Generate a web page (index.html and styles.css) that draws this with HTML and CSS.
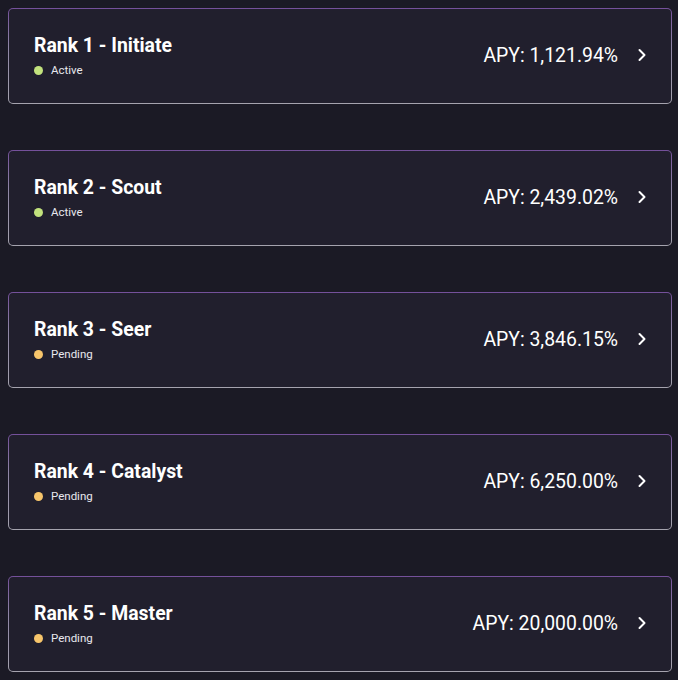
FILE: index.html
```html
<!DOCTYPE html>
<html>
<head>
<meta charset="utf-8">
<link rel="stylesheet" href="styles.css">
</head>
<body>
<div class="list">
  <div class="card">
    <div class="info">
      <div class="title">Rank 1 - Initiate</div>
      <div class="status"><span class="dot active"></span>Active</div>
    </div>
    <div class="apy">APY: 1,121.94%</div>
    <svg class="chev" viewBox="0 0 10 14" width="10" height="14"><path d="M2.5 2 L7.5 7 L2.5 12" fill="none" stroke="#fff" stroke-width="2" stroke-linecap="round" stroke-linejoin="round"/></svg>
  </div>
  <div class="card">
    <div class="info">
      <div class="title">Rank 2 - Scout</div>
      <div class="status"><span class="dot active"></span>Active</div>
    </div>
    <div class="apy">APY: 2,439.02%</div>
    <svg class="chev" viewBox="0 0 10 14" width="10" height="14"><path d="M2.5 2 L7.5 7 L2.5 12" fill="none" stroke="#fff" stroke-width="2" stroke-linecap="round" stroke-linejoin="round"/></svg>
  </div>
  <div class="card">
    <div class="info">
      <div class="title">Rank 3 - Seer</div>
      <div class="status"><span class="dot pending"></span>Pending</div>
    </div>
    <div class="apy">APY: 3,846.15%</div>
    <svg class="chev" viewBox="0 0 10 14" width="10" height="14"><path d="M2.5 2 L7.5 7 L2.5 12" fill="none" stroke="#fff" stroke-width="2" stroke-linecap="round" stroke-linejoin="round"/></svg>
  </div>
  <div class="card">
    <div class="info">
      <div class="title">Rank 4 - Catalyst</div>
      <div class="status"><span class="dot pending"></span>Pending</div>
    </div>
    <div class="apy">APY: 6,250.00%</div>
    <svg class="chev" viewBox="0 0 10 14" width="10" height="14"><path d="M2.5 2 L7.5 7 L2.5 12" fill="none" stroke="#fff" stroke-width="2" stroke-linecap="round" stroke-linejoin="round"/></svg>
  </div>
  <div class="card">
    <div class="info">
      <div class="title">Rank 5 - Master</div>
      <div class="status"><span class="dot pending"></span>Pending</div>
    </div>
    <div class="apy">APY: 20,000.00%</div>
    <svg class="chev" viewBox="0 0 10 14" width="10" height="14"><path d="M2.5 2 L7.5 7 L2.5 12" fill="none" stroke="#fff" stroke-width="2" stroke-linecap="round" stroke-linejoin="round"/></svg>
  </div>
</div>
</body>
</html>
```
FILE: styles.css
```css
html, body {
  margin: 0;
  padding: 0;
  background: #1b1a25;
}
body {
  padding: 8px 6px 8px 8px;
  font-family: Roboto, "Liberation Sans", sans-serif;
  color: #fff;
}
.list {
  display: flex;
  flex-direction: column;
  gap: 46px;
}
.card {
  height: 96px;
  box-sizing: border-box;
  border: 1.5px solid transparent;
  border-radius: 5px;
  background:
    linear-gradient(#211f2d, #211f2d) padding-box,
    linear-gradient(180deg, #74509a 0%, #8f86a6 40%, #a5a3ae 100%) border-box;
  display: flex;
  align-items: center;
  padding: 0 24px 0 25px;
}
.info {
  flex: 1;
  display: flex;
  flex-direction: column;
  gap: 6px;
  margin-top: -1px;
}
.title {
  font-size: 19.4px;
  font-weight: 700;
  line-height: 23px;
}
.status {
  display: flex;
  align-items: center;
  font-size: 11.5px;
  line-height: 14px;
  color: #e8e8ee;
}
.dot {
  width: 9px;
  height: 9px;
  border-radius: 50%;
  margin-right: 8px;
}
.dot.active { background: #c2e27d; }
.dot.pending { background: #f7c56b; }
.apy {
  font-size: 19.4px;
  line-height: 23px;
  margin-right: 19px;
  margin-top: -2px;
}
.chev {
  display: block;
  margin-top: -2px;
}
```
